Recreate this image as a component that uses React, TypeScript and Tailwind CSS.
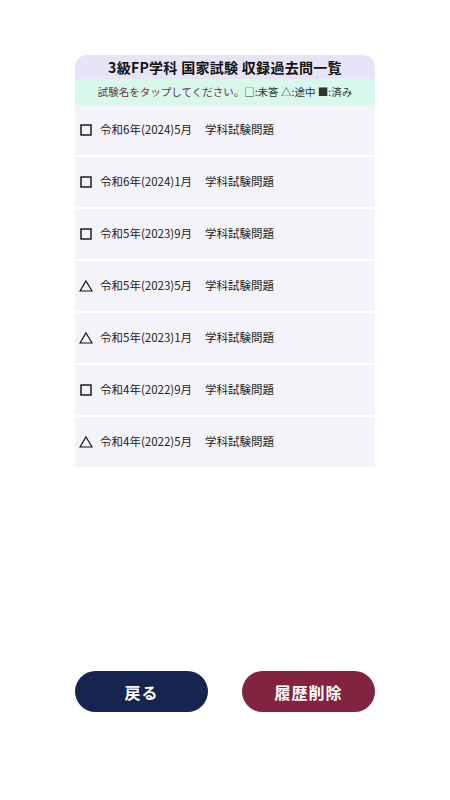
import React from 'react';

type Mark = 'todo' | 'doing';

const exams: { mark: Mark; label: string }[] = [
  { mark: 'todo', label: '令和6年(2024)5月' },
  { mark: 'todo', label: '令和6年(2024)1月' },
  { mark: 'todo', label: '令和5年(2023)9月' },
  { mark: 'doing', label: '令和5年(2023)5月' },
  { mark: 'doing', label: '令和5年(2023)1月' },
  { mark: 'todo', label: '令和4年(2022)9月' },
  { mark: 'doing', label: '令和4年(2022)5月' },
];

const StatusMark: React.FC<{ mark: Mark }> = ({ mark }) => (
  <svg width="14" height="14" viewBox="0 0 14 14" className="shrink-0">
    {mark === 'todo' ? (
      <rect x="2" y="2" width="10" height="10" fill="none" stroke="#111" strokeWidth="1.4" />
    ) : (
      <path d="M7 2 L13 12 L1 12 Z" fill="none" stroke="#111" strokeWidth="1.2" strokeLinejoin="miter" />
    )}
  </svg>
);

const App: React.FC = () => {
  return (
    <div
      className="w-[450px] h-[800px] bg-white flex flex-col items-center text-[#222]"
      style={{ fontFamily: '"Noto Sans CJK JP", "Noto Sans", sans-serif' }}
    >
      {/* List card */}
      <div className="mt-[55px] w-[300px] flex flex-col">
        <div className="h-[24px] bg-[#e6e4f6] rounded-t-[12px] flex items-center justify-center text-[14px] font-semibold tracking-[0.3px] text-[#111]">
          3級FP学科 国家試験 収録過去問一覧
        </div>
        <div className="h-[26px] bg-[#d8f8ec] flex items-center justify-center text-[10.5px]">
          <span className="text-[#6a3447]">試験名をタップしてください。</span>
          <span className="text-[#333]">□:未答 △:途中 ■:済み</span>
        </div>
        <div className="flex flex-col gap-[2px]">
          {exams.map((exam, i) => (
            <div key={i} className="h-[50px] bg-[#f4f3fa] flex items-center pl-[4px] text-[11.5px]">
              <StatusMark mark={exam.mark} />
              <span className="ml-[7px]">{exam.label}</span>
              <span className="ml-[13px]">学科試験問題</span>
            </div>
          ))}
        </div>
      </div>

      {/* Buttons */}
      <div className="mt-auto mb-[88px] w-[300px] flex justify-between">
        <button className="w-[133px] h-[41px] rounded-full bg-[#16244f] text-white text-[16px] font-bold tracking-[1px]">
          戻る
        </button>
        <button className="w-[133px] h-[41px] rounded-full bg-[#82243f] text-white text-[16px] font-bold tracking-[1px]">
          履歴削除
        </button>
      </div>
    </div>
  );
};

export default App;
